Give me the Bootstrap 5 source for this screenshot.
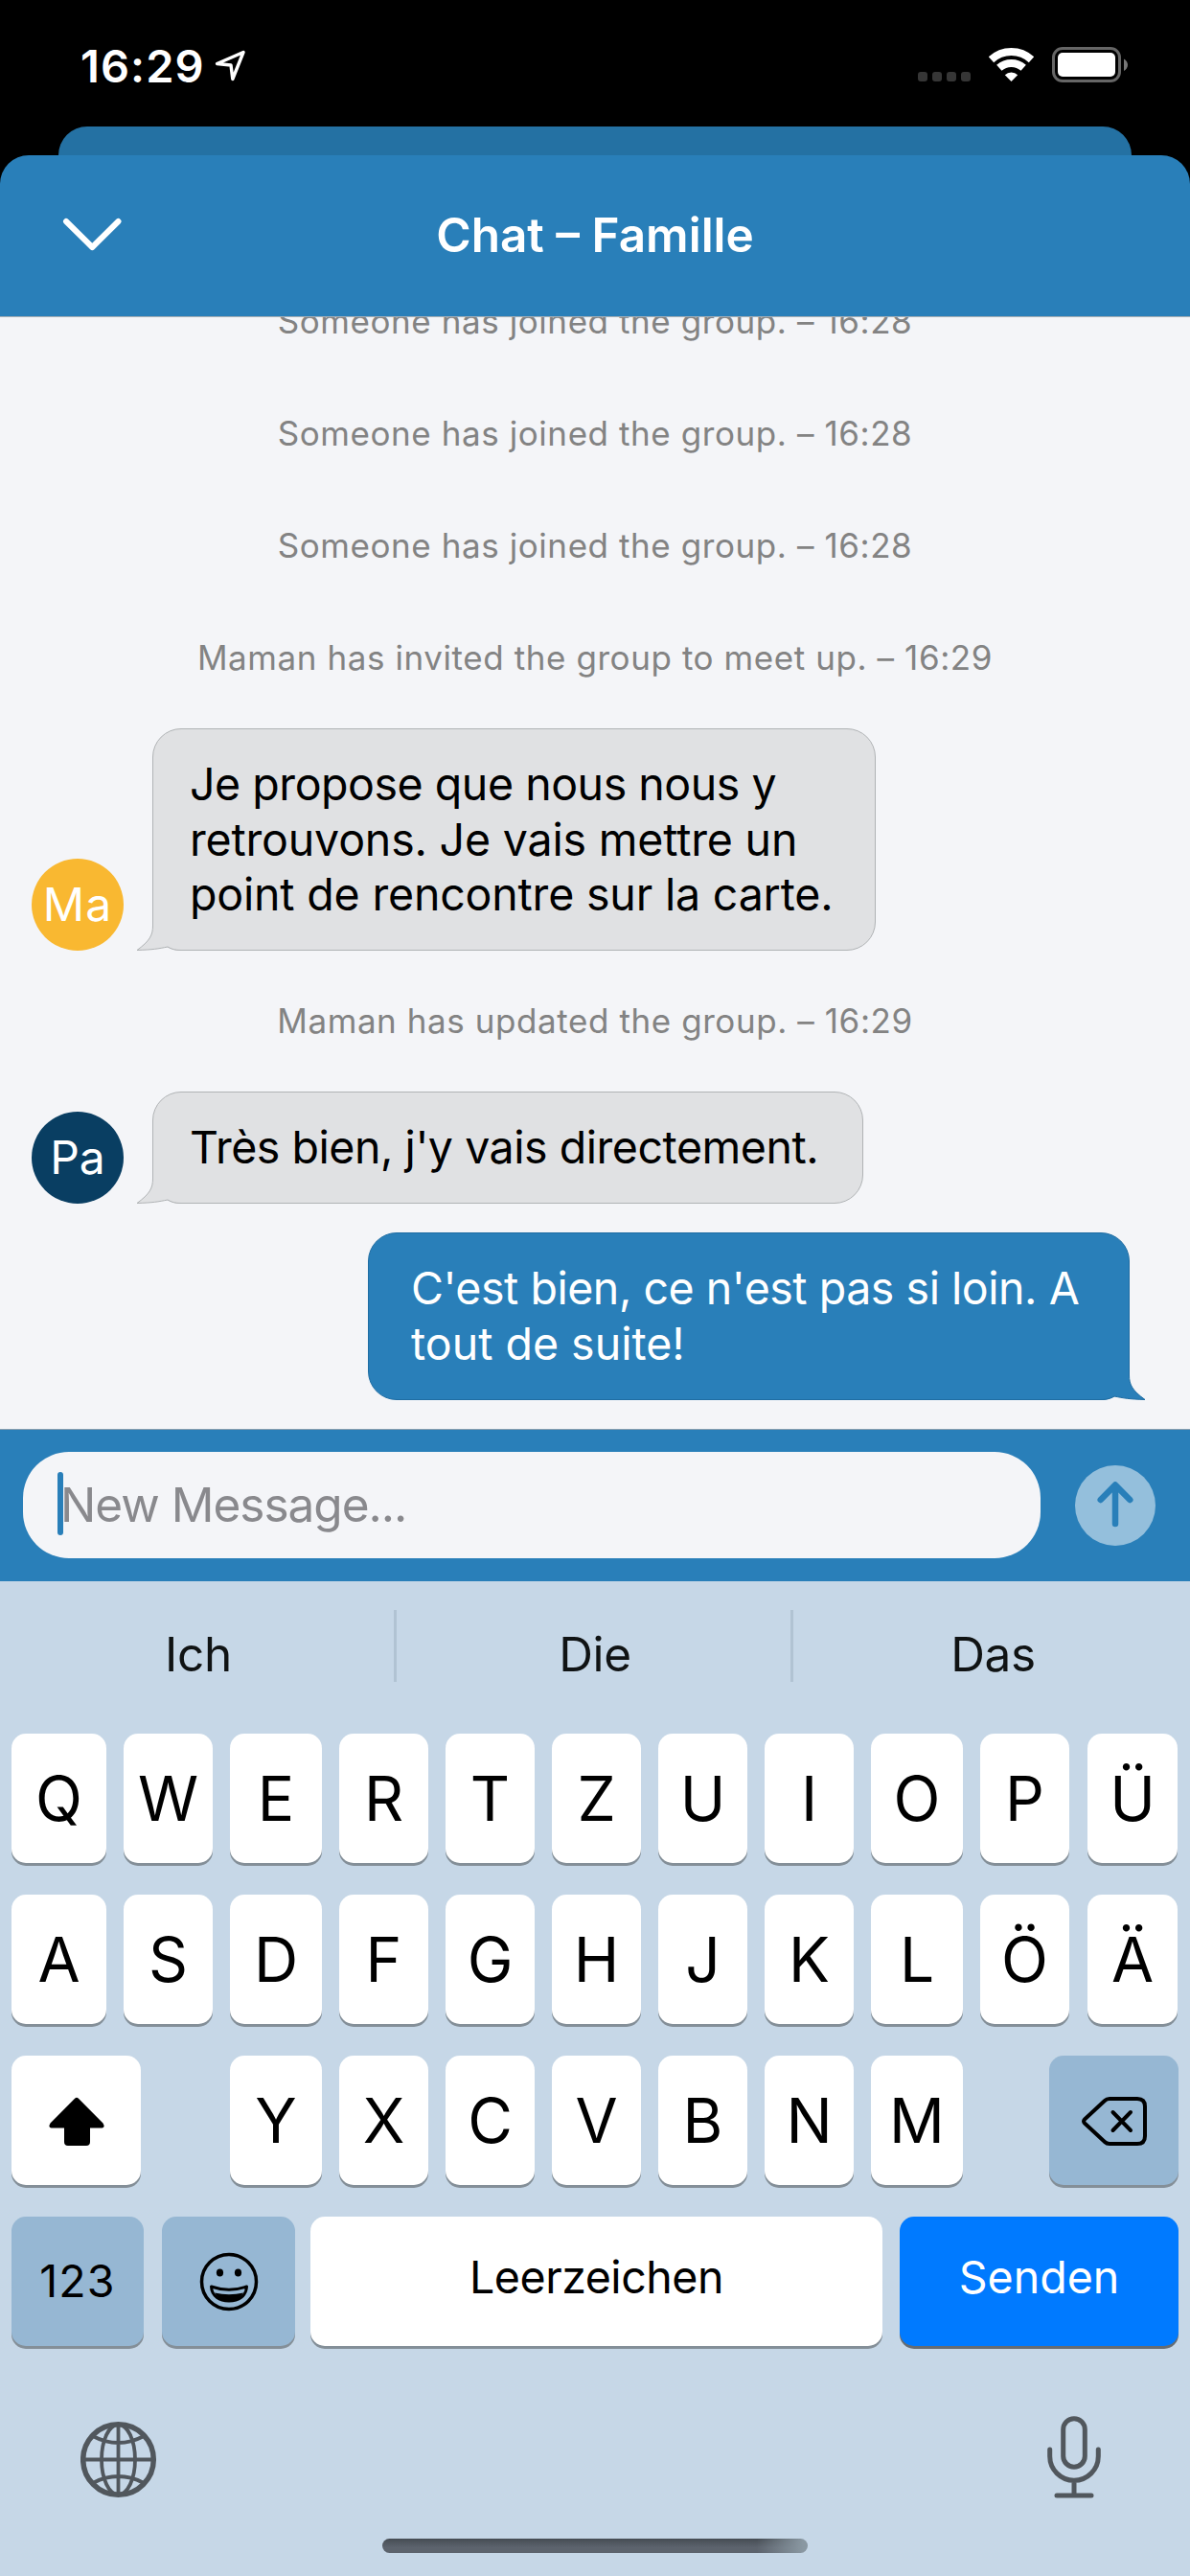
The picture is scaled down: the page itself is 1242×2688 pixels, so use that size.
<!DOCTYPE html>
<html lang="fr">
<head>
<meta charset="utf-8">
<meta name="viewport" content="width=device-width, initial-scale=1">
<title>Chat – Famille</title>
<link href="https://cdn.jsdelivr.net/npm/bootstrap@5.3.0/dist/css/bootstrap.min.css" rel="stylesheet">
<style>
  :root { --brand: #297fb9; --brand-dim: #2471a3; --paper: #f4f5f8; --kbd: #c6d7e7; --fn: #96b7d3; }
  body { font-family: Inter, "Liberation Sans", sans-serif; background: #000; color: #000; }
  .phone { width: 1242px; height: 2688px; background: #000; line-height: 1; }
  svg { display: block; }

  .status { height: 132px; padding: 4px 65px 0 84px; color: #fff; }
  .clock { font-size: 47px; font-weight: 600; letter-spacing: 1.07px; margin-right: 9px; }
  .sheet-back { height: 30px; margin: 0 61px; background: var(--brand-dim); border-radius: 30px 30px 0 0; }
  .sheet-head { height: 168px; background: var(--brand); border-radius: 30px 30px 0 0; padding: 0 62px; color: #fff; }
  .sheet-title { font-size: 49.5px; font-weight: 600; }
  .side-slot { width: 70px; }

  .thread { height: 1161px; background: var(--paper); border-top: 1px solid #a9b0b5; padding: 0 33px 30px; gap: 30px; }
  .notice { height: 87px; font-size: 35px; letter-spacing: .58px; color: #838383; }
  .avatar { width: 96px; height: 96px; font-size: 48px; color: #fff; }
  .av-ma { background: #f9b831; letter-spacing: 1px; }
  .av-pa { background: #093e62; }
  .msg { font-size: 46.5px; line-height: 57.3px; border: 1px solid #b0b3b5; border-radius: 30px; background: #e0e1e3; white-space: nowrap; }
  .msg-in { margin-left: 30px; padding: 29px 10px 29px 38px; }
  .msg-wide { width: 755px; }
  .msg-mid { width: 742px; }
  .msg-out { width: 795px; margin-right: 30px; padding: 29px 10px 29px 44px; background: var(--brand); border-color: #1f6da3; color: #fff; }
  .snug { letter-spacing: -.18px; }
  .snugger { letter-spacing: -.46px; }
  .tail { position: absolute; bottom: -1px; }
  .tail-in { left: -18px; }
  .tail-out { right: -18px; }

  .composer { height: 159px; background: var(--brand); border-top: 1px solid #8b9fae; padding: 0 36px 0 24px; }
  .field { width: 1062px; height: 111px; margin-bottom: 1px; border-radius: 48px; background: var(--paper); padding-left: 39px; color: #89898d; font-size: 49.5px; letter-spacing: -1px; }
  .caret { position: absolute; left: 36px; top: 21px; width: 6px; height: 66px; border-radius: 3px; background: var(--brand); }
  .send { width: 84px; height: 84px; background: #94bfdc; }

  .keyboard { height: 1038px; background: var(--kbd); padding: 30px 12px 0; }
  .suggest { height: 75px; margin: 0 -12px 54px; font-size: 49.5px; letter-spacing: -.3px; color: #101314; }
  .suggest > div { padding: 22px 0 0 3px; width: 414px; }
  .suggest > .split { border-right: 3px solid #b1c3d3; }
  .keys { gap: 18px; margin-bottom: 33px; }
  .key { width: 93px; height: 135px; border-radius: 15px; background: #fff; box-shadow: 0 3px 0 #848f98; font-size: 64px; display: flex; align-items: center; justify-content: center; }
  .fn { background: var(--fn); }
  .go { background: #007aff; color: #fff; box-shadow: 0 3px 0 #656c73; }
  .txt { font-size: 46.5px; }
  .up { padding-bottom: 9px; }
  .w94 { width: 94px; margin-left: 1px; }
  .w96 { width: 96px; }
  .w99 { width: 99px; }
  .shift { width: 135px; margin-right: 75px; }
  .del { width: 135px; margin-left: 72px; }
  .k123 { width: 138px; margin-right: 1px; letter-spacing: 1.2px; }
  .kemo { width: 139px; margin-right: -2px; }
  .kspace { width: 597px; }
  .kgo { width: 291px; }
  .tools { padding: 40px 81px 0 72px; height: 126px; }
  .home-bar { width: 444px; height: 15px; margin: 42px auto 0; border-radius: 8px; background: linear-gradient(90deg, rgba(138,152,162,0) 88%, #8a98a2 99%), linear-gradient(#454c53, #5c636d 60%); }
</style>
</head>
<body>
<div class="phone d-flex flex-column overflow-hidden">

  <div class="status d-flex align-items-center justify-content-between">
    <div class="d-flex align-items-center">
      <span class="clock">16:29</span>
      <svg width="36" height="36" viewBox="0 0 36 36" fill="none" stroke="#fff" stroke-width="3.4" stroke-linejoin="round"><path d="M3.500 16.500 31 4.500 19.800 32.500 18 18z"/></svg>
    </div>
    <svg width="219" height="40" viewBox="0 0 219 40">
      <g fill="#363636"><rect x="0" y="27" width="10" height="10" rx="3"/><rect x="15" y="27" width="10" height="10" rx="3"/><rect x="30" y="27" width="10" height="10" rx="3"/><rect x="45" y="27" width="10" height="10" rx="3"/></g>
      <g fill="none" stroke="#fff" stroke-width="8"><path d="M76.500 14.200a31 31 0 0 1 42 0"/><path d="M84.800 22.800a19 19 0 0 1 25.400 0"/></g>
      <path d="M97.500 37l-6.700-6.800a10 10 0 0 1 13.400 0z" fill="#fff"/>
      <rect x="141.500" y="2.500" width="69" height="34" rx="9.500" fill="none" stroke="#666" stroke-width="3"/>
      <rect x="146" y="7" width="60" height="25" rx="5" fill="#fff"/>
      <path d="M215 13.500c5.300 2.500 5.300 10 0 12.500z" fill="#777"/>
    </svg>
  </div>

  <div>
    <div class="sheet-back"></div>
    <header class="sheet-head d-flex align-items-center justify-content-between">
      <div class="side-slot"><svg width="68" height="40" viewBox="0 0 68 40" fill="none" stroke="#fff" stroke-width="6" stroke-linecap="round" stroke-linejoin="round"><path d="M7 5 34.300 32 61.500 5"/></svg></div>
      <span class="sheet-title">Chat – Famille</span>
      <div class="side-slot"></div>
    </header>
  </div>

  <main class="thread d-flex flex-column justify-content-end overflow-hidden flex-shrink-0">
    <div class="notice d-flex align-items-center justify-content-center flex-shrink-0">Someone has joined the group. – 16:28</div>
    <div class="notice d-flex align-items-center justify-content-center flex-shrink-0">Someone has joined the group. – 16:28</div>
    <div class="notice d-flex align-items-center justify-content-center flex-shrink-0">Someone has joined the group. – 16:28</div>
    <div class="notice d-flex align-items-center justify-content-center flex-shrink-0">Maman has invited the group to meet up. – 16:29</div>
    <div class="d-flex align-items-end flex-shrink-0">
      <div class="avatar av-ma rounded-circle d-flex align-items-center justify-content-center">Ma</div>
      <div class="msg msg-in msg-wide position-relative">
        <svg class="tail tail-in" width="50" height="34" viewBox="0 0 50 34"><path d="M17.500 2V8C17.500 18 14 24 1 33.500 18 33 23 32 33 30 37 32.500 41 33.500 47 33.500V2z" fill="#e0e1e3"/><path d="M17.500 2V8C17.500 18 14 24 1 33.500 18 33 23 32 33 30 37 32.500 41 33.500 47 33.500" fill="none" stroke="#b0b3b5"/></svg>
        <span class="snugger">Je propose que nous nous y</span><br><span class="snug">retrouvons. Je vais mettre un</span><br><span class="snug">point de rencontre sur la carte.</span>
      </div>
    </div>
    <div class="notice d-flex align-items-center justify-content-center flex-shrink-0">Maman has updated the group. – 16:29</div>
    <div class="d-flex align-items-end flex-shrink-0">
      <div class="avatar av-pa rounded-circle d-flex align-items-center justify-content-center">Pa</div>
      <div class="msg msg-in msg-mid position-relative">
        <svg class="tail tail-in" width="50" height="34" viewBox="0 0 50 34"><path d="M17.500 2V8C17.500 18 14 24 1 33.500 18 33 23 32 33 30 37 32.500 41 33.500 47 33.500V2z" fill="#e0e1e3"/><path d="M17.500 2V8C17.500 18 14 24 1 33.500 18 33 23 32 33 30 37 32.500 41 33.500 47 33.500" fill="none" stroke="#b0b3b5"/></svg>
        <span class="snugger">Très bien, j'y vais directement.</span>
      </div>
    </div>
    <div class="d-flex justify-content-end flex-shrink-0">
      <div class="msg msg-out position-relative">
        <svg class="tail tail-out" width="50" height="34" viewBox="0 0 50 34"><g transform="matrix(-1 0 0 1 50 0)"><path d="M17.500 2V8C17.500 18 14 24 1 33.500 18 33 23 32 33 30 37 32.500 41 33.500 47 33.500V2z" fill="#297fb9"/><path d="M17.500 2V8C17.500 18 14 24 1 33.500 18 33 23 32 33 30 37 32.500 41 33.500 47 33.500" fill="none" stroke="#1f6da3"/></g></svg>
        <span class="snugger">C'est bien, ce n'est pas si loin. A</span><br><span>tout de suite!</span>
      </div>
    </div>
  </main>

  <div class="composer d-flex align-items-center justify-content-between flex-shrink-0">
    <div class="field position-relative d-flex align-items-center"><span class="caret"></span><span>New Message...</span></div>
    <div class="send rounded-circle d-flex align-items-center justify-content-center">
      <svg width="50" height="56" viewBox="0 0 50 56" fill="none" stroke="#297fb9" stroke-width="6.500" stroke-linecap="round" stroke-linejoin="round"><path d="M25 47V7M9.700 22 25 6.500 40.300 22"/></svg>
    </div>
  </div>

  <section class="keyboard flex-shrink-0">
    <div class="suggest d-flex text-center">
      <div class="split">Ich</div><div class="split">Die</div><div>Das</div>
    </div>
    <div class="keys d-flex">
      <div class="key w99">Q</div><div class="key">W</div><div class="key w96">E</div><div class="key">R</div><div class="key">T</div><div class="key">Z</div><div class="key">U</div><div class="key">I</div><div class="key w96">O</div><div class="key">P</div><div class="key w94">Ü</div>
    </div>
    <div class="keys d-flex">
      <div class="key w99">A</div><div class="key">S</div><div class="key w96">D</div><div class="key">F</div><div class="key">G</div><div class="key">H</div><div class="key">J</div><div class="key">K</div><div class="key w96">L</div><div class="key">Ö</div><div class="key w94">Ä</div>
    </div>
    <div class="keys d-flex">
      <div class="key shift"><svg width="60" height="54" viewBox="0 0 60 54"><path d="M28.300 3.600q1.700-1.600 3.400 0L57.500 29.500q2.500 4.500-1 5H44V49q0 4-4 4H21q-4 0-4-4V34.500H3.500q-3.500-.5-1-5z"/></svg></div>
      <div class="key w96">Y</div><div class="key">X</div><div class="key">C</div><div class="key">V</div><div class="key">B</div><div class="key">N</div><div class="key w96">M</div>
      <div class="key fn del"><svg width="70" height="54" viewBox="0 0 70 54" fill="none" stroke="#000" stroke-width="4" stroke-linecap="round" stroke-linejoin="round"><path d="M30 4H59q8 0 8 8V43q0 8-8 8H30q-3 0-5-2L4 29.500q-2-2 0-4L25 6q2-2 5-2zM33.500 18 52 37M52 18 33.500 37"/></svg></div>
    </div>
    <div class="keys d-flex">
      <div class="key fn k123 txt">123</div>
      <div class="key fn kemo">
        <svg width="62" height="62" viewBox="0 0 62 62"><circle cx="31" cy="31" r="28.500" fill="none" stroke="#000" stroke-width="3.500"/><ellipse cx="21.500" cy="21.500" rx="3.600" ry="4"/><ellipse cx="40.500" cy="21.500" rx="3.600" ry="4"/><path d="M12.500 36q18.500 6.500 37 0C49 46 41 51 31 51S13 46 12.500 36z" fill="#96b7d3" stroke="#000" stroke-width="3" stroke-linejoin="round"/><path d="M16 42.500q15 3.500 30 0C43 48 38 51 31 51S19 48 16 42.500z"/></svg>
      </div>
      <div class="key kspace txt up snugger">Leerzeichen</div>
      <div class="key go kgo txt up">Senden</div>
    </div>
    <div class="tools d-flex align-items-start justify-content-between">
      <svg class="mt-1" width="80" height="82" viewBox="0 0 80 82" fill="none" stroke="#51575d"><g transform="translate(0 1)"><circle cx="39.500" cy="40.500" r="36.800" stroke-width="5.500"/><g stroke-width="3.800"><path d="M39.500 3V78M3 40.500H76M14 16.500Q26 23 39.500 23T65 16.500M14 64.500Q26 58 39.500 58T65 64.500"/><ellipse cx="39.500" cy="40.500" rx="17.500" ry="36.500"/></g></g></svg>
      <svg width="56" height="86" viewBox="0 0 56 86" fill="none" stroke="#51575d" stroke-width="5" stroke-linecap="round"><rect x="16.700" y="2.700" width="22.600" height="50.500" rx="11.300"/><path d="M2.700 35V42a25.300 25.300 0 0 0 50.600 0V35M28 68V82M10 83H46"/></svg>
    </div>
    <div class="home-bar"></div>
  </section>
</div>
<script src="https://cdn.jsdelivr.net/npm/bootstrap@5.3.0/dist/js/bootstrap.bundle.min.js"></script>
</body>
</html>
